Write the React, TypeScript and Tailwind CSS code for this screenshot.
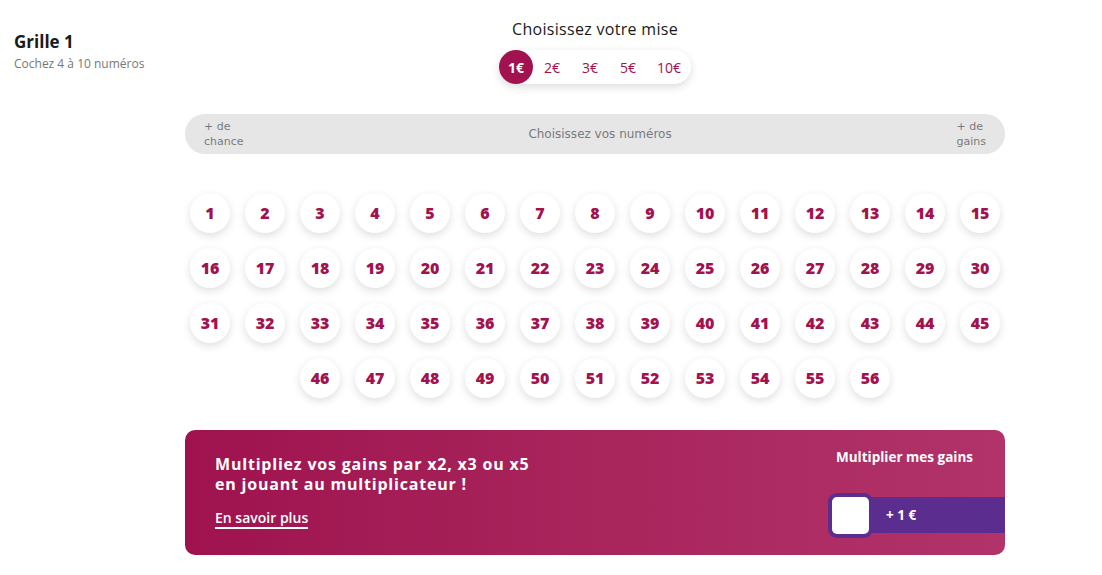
import React from 'react';

const PINK = 'text-[#a1124f]';

const stakes = [
  { label: '1€', w: 'w-[34px]' },
  { label: '2€', w: 'w-[38px]' },
  { label: '3€', w: 'w-[38px]' },
  { label: '5€', w: 'w-[38px]' },
  { label: '10€', w: 'w-[44px]' },
];

const numbers = Array.from({ length: 56 }, (_, i) => i + 1);

const Ball: React.FC<{ n: number }> = ({ n }) => (
  <div
    className={`w-[40px] h-[40px] rounded-full bg-white shadow-[0_3px_8px_rgba(0,0,0,0.13)] flex items-center justify-center text-[16px] font-extrabold ${PINK}`}
  >
    {n}
  </div>
);

export default function App() {
  return (
    <div className="w-[1102px] h-[575px] bg-white flex font-['Open_Sans',sans-serif] text-[#1a1a1a]">
      {/* colonne gauche */}
      <div className="w-[185px] pl-[14px] pt-[31px]">
        <h2 className="text-[17px] leading-[22px] font-bold">Grille 1</h2>
        <p className="mt-[3px] text-[12px] leading-[15px] text-[#777]">Cochez 4 à 10 numéros</p>
      </div>

      {/* contenu */}
      <div className="w-[820px] flex flex-col">
        <div className="flex flex-col items-center pt-[19px]">
          <p className="text-[16px] leading-[20px] tracking-[0.3px]">Choisissez votre mise</p>
          <div className="mt-[11px] flex h-[34px] rounded-full bg-white shadow-[0_3px_8px_rgba(0,0,0,0.14)]">
            {stakes.map((s, i) => (
              <div
                key={s.label}
                className={`${s.w} h-[34px] flex items-center justify-center text-[14px] ${
                  i === 0 ? 'rounded-full bg-[#a1124f] text-white font-bold' : PINK
                }`}
              >
                {s.label}
              </div>
            ))}
          </div>
        </div>

        <div className="mt-[30px] h-[40px] rounded-full bg-[#e6e6e6] flex items-center justify-between px-[19px] text-[11px] leading-[15px] text-[#7a7a7a] font-['DejaVu_Sans',sans-serif]">
          <span>
            + de
            <br />
            chance
          </span>
          <span className="text-[12px]">Choisissez vos numéros</span>
          <span>
            + de
            <br />
            gains
          </span>
        </div>

        <div className="mt-[39px] px-[5px]">
          <div className="w-[810px] flex flex-wrap justify-center gap-[15px]">
            {numbers.map((n) => (
              <Ball key={n} n={n} />
            ))}
          </div>
        </div>

        <div className="mt-[32px] h-[125px] rounded-[10px] overflow-hidden bg-gradient-to-r from-[#9f124e] to-[#b1336a] flex text-white">
          <div className="flex-1 pl-[30px] pt-[24px]">
            <p className="text-[16px] leading-[20px] font-bold tracking-[0.8px]">
              Multipliez vos gains par x2, x3 ou x5
              <br />
              en jouant au multiplicateur !
            </p>
            <a className="inline-block mt-[15px] text-[14px] leading-[17px] font-semibold border-b-2 border-white pb-[1px]">
              En savoir plus
            </a>
          </div>
          <div className="w-[176px] flex flex-col pt-[19px]">
            <p className="ml-[7px] text-[13.5px] leading-[16px] font-bold">Multiplier mes gains</p>
            <div className="mt-[32px] h-[36px] bg-[#5b2d8e] flex items-center">
              <div className="-ml-[1px] w-[45px] h-[45px] rounded-[9px] bg-white border-[4px] border-[#5b2d8e]" />
              <span className="ml-[13px] text-[13.5px] font-bold">+ 1 €</span>
            </div>
          </div>
        </div>
      </div>
    </div>
  );
}
